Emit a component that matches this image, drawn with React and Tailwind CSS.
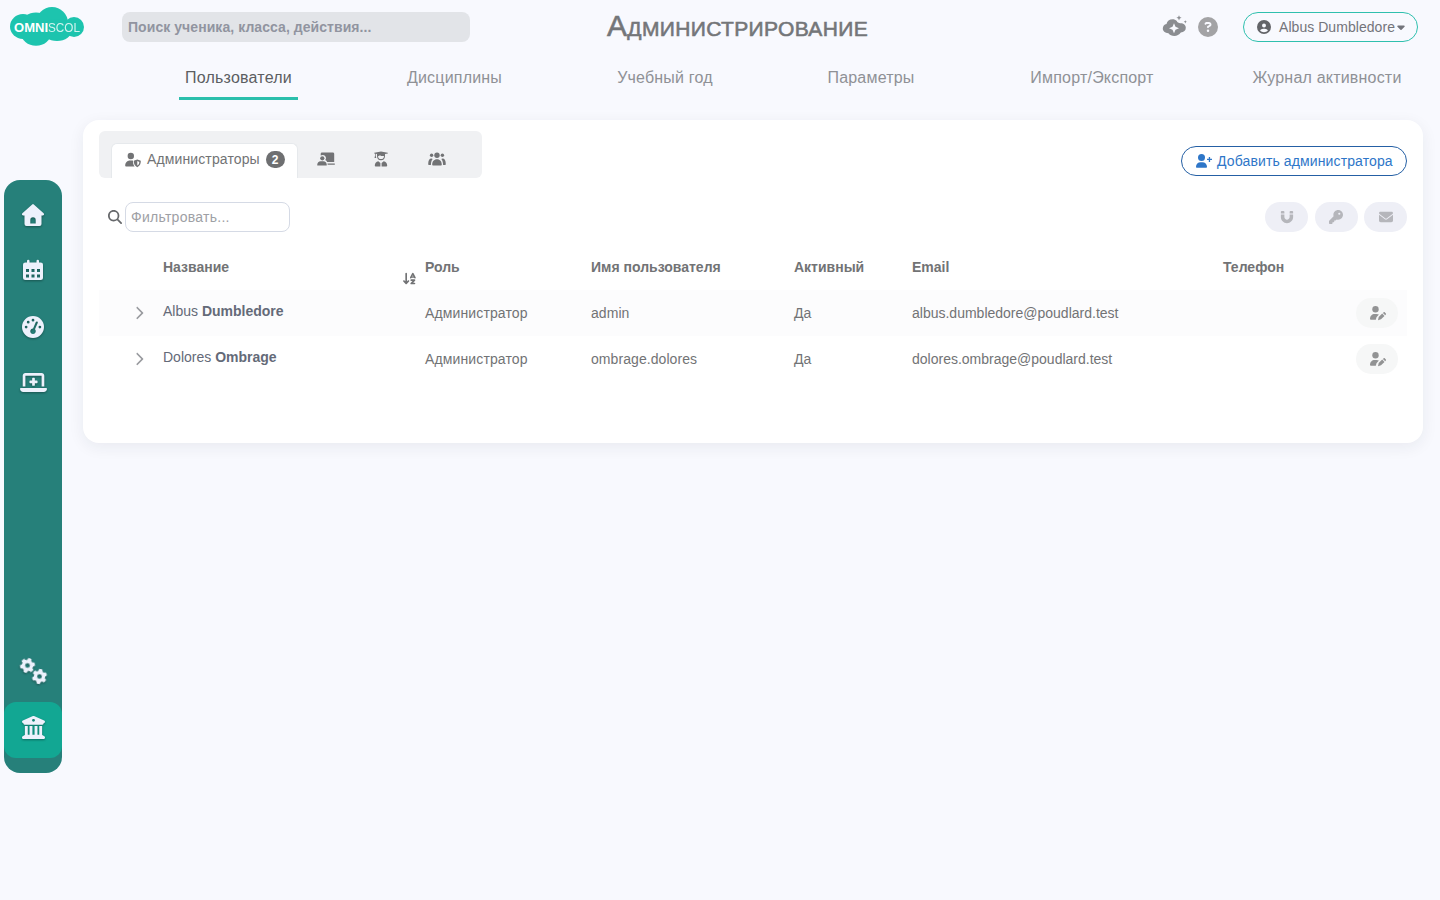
import React, { useState } from 'react';
import {
  FaArrowDownAZ,
  FaBuildingColumns,
  FaCaretDown,
  FaChevronRight,
  FaCircleQuestion,
  FaCircleUser,
  FaEnvelope,
  FaGaugeHigh,
  FaGear,
  FaKey,
  FaLaptopMedical,
  FaMagnet,
  FaMagnifyingGlass,
} from 'react-icons/fa6';

const menu = [
  { label: 'Пользователи', className: 'w-[119px]' },
  { label: 'Дисциплины', className: 'w-[107px]' },
  { label: 'Учебный год', className: 'w-[108px]' },
  { label: 'Параметры', className: 'w-[98px]' },
  { label: 'Импорт/Экспорт', className: 'w-[138px]' },
  { label: 'Журнал активности', className: 'w-[162px] -ml-[18px]' },
];

const users = [
  { first: 'Albus', last: 'Dumbledore', role: 'Администратор', login: 'admin', active: 'Да', email: 'albus.dumbledore@poudlard.test' },
  { first: 'Dolores', last: 'Ombrage', role: 'Администратор', login: 'ombrage.dolores', active: 'Да', email: 'dolores.ombrage@poudlard.test' },
];

const Logo = () => (
  <svg width="76" height="40" viewBox="0 0 76 40" className="ml-[9px] mt-[6px] shrink-0">
    <g fill="#1dc4ae">
      <ellipse cx="14" cy="20.500" rx="13" ry="12.500" />
      <circle cx="43" cy="17" r="16" />
      <ellipse cx="27" cy="27" rx="15" ry="12.700" />
      <ellipse cx="27" cy="17" rx="14" ry="10.500" />
      <ellipse cx="48" cy="24" rx="15" ry="11" />
      <circle cx="65" cy="21" r="10" />
    </g>
    <text x="5" y="25.500" fill="#fff" fontFamily="Liberation Sans, sans-serif" fontSize="13.500" fontWeight="700" textLength="34" lengthAdjust="spacingAndGlyphs">OMNI</text>
    <text x="39" y="25.500" fill="#fff" fontFamily="Liberation Sans, sans-serif" fontSize="13.500" textLength="32" lengthAdjust="spacingAndGlyphs" opacity=".8">SCOL</text>
  </svg>
);

const CloudIcon = () => (
  <svg width="26" height="22" viewBox="0 0 26 22" fill="#8b8d91">
    <path fillRule="evenodd" d="M4.500 9C5 6 7.500 4.300 10.500 4.300c1.700 0 3.200.6 4.300 1.700.4 1.400 1.900 2 3.500 2.300 3.300-.1 5.500 1.700 5.500 4.500s-2 4.500-5 4.800C17.300 19.600 15 21 12.300 21c-2.500 0-4.500-1-5.900-2.800C3 18 .8 16.200.8 13.500c0-2.200 1.400-4 3.700-4.500zM12 8.200l-1.500 3.500L7 13.200l3.500 1.500 1.500 3.500 1.500-3.500 3.500-1.500-3.500-1.500z" />
    <path d="M17 .2l.8 1.800 1.800.8-1.800.8L17 5.400l-.8-1.800-1.800-.8 1.800-.8zM23.300 5.200l.5 1.100 1.100.5-1.100.5-.5 1.100-.5-1.100-1.100-.5 1.100-.5z" />
  </svg>
);

const HouseIcon = () => (
  <svg width="24" height="24" viewBox="0 0 24 24" fill="currentColor">
    <path fillRule="evenodd" d="M11.200 1.400a1.200 1.200 0 0 1 1.600 0L22.600 10.300c.9.800.4 2.200-.8 2.200H20.500V21a2 2 0 0 1-2 2h-13a2 2 0 0 1-2-2v-8.500H2.200c-1.200 0-1.700-1.400-.8-2.200zM9.300 20.500h5.400V17a2.700 2.700 0 0 0-5.400 0z" />
  </svg>
);

const CalendarIcon = () => (
  <svg width="22" height="24" viewBox="0 0 22 24" fill="currentColor">
    <path fillRule="evenodd" d="M5 2a1.250 1.250 0 0 1 2.500 0v1.500h7V2A1.250 1.250 0 0 1 17 2v1.500h1.500A2.500 2.500 0 0 1 21 6v12.500a2.500 2.500 0 0 1-2.500 2.500h-15A2.500 2.500 0 0 1 1 18.500V6a2.500 2.500 0 0 1 2.500-2.500H5zM4 10v3h3v-3zm5.500 0v3h3v-3zm5.500 0v3h3v-3zM4 15.500v3h3v-3zm5.500 0v3h3v-3zm5.500 0v3h3v-3z" />
  </svg>
);

const GearsIcon = () => (
  <div className="flex h-[27px] w-[27px] justify-between">
    <FaGear size={15} className="shrink-0 rotate-[20deg]" />
    <FaGear size={15} className="-ml-[3px] mt-[11px] shrink-0 rotate-[10deg]" />
  </div>
);

const UserShieldIcon = () => (
  <svg width="16" height="16" viewBox="0 0 16 16" fill="currentColor" className="mr-[6px] shrink-0">
    <circle cx="5.800" cy="4" r="3.200" />
    <path d="M1 14.500c-.5 0-.8-.3-.8-.8 0-3 2-5.200 4.800-5.200h1.800c.5 0 .9.100 1.300.2v1.600c0 1.600.5 3 1.500 4.200z" />
    <path fillRule="evenodd" d="M12.300 7.400l3 1.200c.3.100.5.400.5.700 0 2.600-.9 4.600-3.500 5.900-2.600-1.300-3.500-3.300-3.500-5.900 0-.3.200-.6.500-.7zm0 1.700v4.400c1.300-.8 1.900-1.900 2-3.600z" />
  </svg>
);

const UserPlusIcon = () => (
  <svg width="18" height="16" viewBox="0 0 18 16" fill="currentColor" className="mr-[4px] shrink-0">
    <circle cx="6.500" cy="4.500" r="3.500" />
    <path d="M2 14.800c-.6 0-1-.4-1-1C1 11 3 9.200 5.500 9.200h2c2.500 0 4.500 1.800 4.500 4.600 0 .6-.4 1-1 1zM13.800 4h1.300v1.800H17v1.300h-1.900V9h-1.300V7.100H12V5.800h1.800z" />
  </svg>
);

const UserPenIcon = () => (
  <svg width="17" height="16" viewBox="0 0 17 16" fill="currentColor">
    <circle cx="6.500" cy="4.200" r="3.200" />
    <path d="M1.900 14.800c-.5 0-.9-.3-.9-.8C1 11 3 9 5.700 9h1.800c.9 0 1.700.2 2.400.6l-2.400 2.600-.7 2.600zM13.200 8.600l2.300 2.300-3.500 3.400-3 .9.700-3.100zM13.900 7.900l.6-.5c.4-.4 1-.4 1.400 0l.8.900c.4.400.4 1 0 1.400l-.5.500z" />
  </svg>
);

const TeacherIcon = () => (
  <svg width="18" height="14" viewBox="0 0 18 14" fill="currentColor">
    <path d="M5 .5h10.800c.8 0 1.400.6 1.400 1.400v8.200h-7c-.4-.9-1-1.600-1.900-2 .5-.6.700-1.300.7-2 0-1.800-1.400-3.200-3.200-3.200-.8 0-1.500.2-2.100.7V1.900C3.700 1.100 4.200.5 5 .5z" />
    <circle cx="5.300" cy="6.300" r="2.100" />
    <path d="M.8 13.500c-.4 0-.6-.3-.6-.6 0-2.100 1.500-3.600 3.500-3.600h2.600c2 0 3.500 1.500 3.500 3.600 0 .4-.3.600-.6.600zM10.500 11.500h7.300v1.300h-7.100z" />
  </svg>
);

const StudentIcon = () => (
  <svg width="14" height="16" viewBox="0 0 14 16" fill="currentColor">
    <path d="M.3 1.700L7 .5l6.700 1.200c.4.100.4.700 0 .8L11 3.100v2h-1.200C8 5.200 6.500 4.700 5.800 4.200 5.200 5 4.300 5.300 3 5.400V3.100l-1.300-.3v2L2.300 7H.5l.5-2.200V2.600L.3 2.500c-.4-.1-.4-.7 0-.8z" />
    <path d="M3 5c0 2.800 1.500 4.200 4 4.200s4-1.400 4-4.200h-1c0 2-1 3.100-3 3.100S4 7 4 5zM4.300 10.200L6.400 12v3.500H1.600c-.5 0-.8-.3-.8-.8 0-2.500 1.300-4.200 3.500-4.500zM9.700 10.200L7.600 12v3.500h4.800c.5 0 .8-.3.800-.8 0-2.500-1.300-4.200-3.500-4.500z" />
  </svg>
);

const GroupIcon = () => (
  <svg width="18" height="14" viewBox="0 0 18 14" fill="currentColor">
    <circle cx="9" cy="3.200" r="2.700" />
    <circle cx="3.600" cy="3.300" r="1.700" />
    <circle cx="14.400" cy="3.300" r="1.700" />
    <path d="M5 13.500c-.5 0-.8-.3-.8-.8C4.200 9.500 6 7.200 9 7.200s4.800 2.300 4.800 5.500c0 .5-.3.800-.8.800zM4.700 7C3.500 8.400 3 10 2.900 13H.9c-.4 0-.7-.3-.7-.7C.2 8.500 1.300 6.500 3.400 6.500c.5 0 .9.200 1.300.5zM13.300 7c1.200 1.400 1.700 3 1.800 6h2c.4 0 .7-.3.7-.7 0-3.800-1.100-5.800-3.200-5.800-.5 0-.9.200-1.300.5z" />
  </svg>
);

const Sidebar = () => (
  <aside className="ml-1 mt-[126px] flex h-[593px] w-[58px] shrink-0 flex-col items-center rounded-2xl bg-[#26807a] text-[#edf1fc]">
    <div className="flex h-[505px] w-full flex-col items-center pt-[23px] [&_svg]:drop-shadow-[0_1px_1px_rgba(0,0,0,0.35)]">
      <HouseIcon />
      <div className="mt-8 h-6"><CalendarIcon /></div>
      <FaGaugeHigh size={22} className="mt-[33px]" />
      <FaLaptopMedical size={27} className="mt-[31px]" />
      <div className="mt-auto"><GearsIcon /></div>
    </div>
    <div className="mt-[17px] flex h-[56px] w-full items-center justify-center rounded-xl bg-[#12a793] pb-[5px]">
      <FaBuildingColumns size={23} className="drop-shadow-[0_1px_1px_rgba(0,0,0,0.35)]" />
    </div>
  </aside>
);

const Header = () => (
  <header className="flex h-[54px] items-start">
    <Logo />
    <input
      className="ml-[37px] mt-[12px] h-[30px] w-[348px] rounded-lg bg-[#e2e4e8] px-[6px] text-[14px] font-bold tracking-[0.06px] outline-none placeholder:text-[#9194a0]"
      placeholder="Поиск ученика, класса, действия..."
    />
    <h1 className="ml-[137px] mt-[8px] w-[262px] whitespace-nowrap text-[30px] leading-[36px] tracking-[0.36px] text-[#747679] [-webkit-text-stroke:0.6px_#747679] [font-variant:small-caps]">
      Администрирование
    </h1>
    <div className="ml-auto mr-[22px] flex items-center">
      <div className="mt-[15px] self-start"><CloudIcon /></div>
      <FaCircleQuestion size={20} className="ml-[10px] mt-[12px] text-[#a3a3a5]" />
      <button className="ml-[25px] mt-[12px] flex h-[30px] w-[175px] items-center whitespace-nowrap rounded-full border border-[#2fc0ae] pl-[13px] text-[14px] tracking-[0.05px] text-[#73747b]">
        <FaCircleUser size={14} className="mr-[8px] shrink-0 text-[#636468]" />
        Albus Dumbledore
        <FaCaretDown size={12} className="shrink-0" />
      </button>
    </div>
  </header>
);

const Menu = () => (
  <nav className="ml-[117px] flex h-[46px] gap-[103px] text-[16px] tracking-[0.2px] text-[#8f9196]">
    {menu.map((item, i) => (
      <a
        key={item.label}
        className={`${item.className} flex shrink-0 justify-center whitespace-nowrap pt-[12px] leading-6 ${i === 0 ? 'border-b-[3px] border-[#2bbfac] text-[#5c5e62]' : ''}`}
      >
        {item.label}
      </a>
    ))}
  </nav>
);

const UserTabs = () => (
  <div className="flex h-[47px] w-[383px] items-end rounded-md bg-[#f0f1f3] pl-3 text-[#727375]">
    <div className="flex h-[35px] w-[187px] items-center whitespace-nowrap rounded-t-md border border-b-0 border-[#e6e9ec] bg-white pb-[3px] pl-[13px] text-[14px] tracking-[0.12px]">
      <UserShieldIcon />
      Администраторы
      <span className="ml-[6px] flex h-[17px] w-[19px] items-center justify-center rounded-full bg-[#6e6f71] text-[12px] font-bold text-white">2</span>
    </div>
    <div className="ml-[19px] flex h-[38px] items-center">
      <TeacherIcon />
      <div className="ml-[39px]"><StudentIcon /></div>
      <div className="ml-[40px]"><GroupIcon /></div>
    </div>
  </div>
);

const ActionButton = ({ children }) => (
  <button className="flex h-[30px] w-[43px] items-center justify-center rounded-full bg-[#eeeff6] text-[#b5b6bb]">
    {children}
  </button>
);

const columns = 'grid grid-cols-[64px_262px_166px_203px_118px_311px_184px]';

const UserTable = () => (
  <div className="text-[14px] text-[#727375]">
    <div className={`${columns} h-[48px] pt-[15px] font-bold leading-5`}>
      <span />
      <div className="flex justify-between">
        Название
        <FaArrowDownAZ size={15} className="mr-[8px] mt-[14px]" />
      </div>
      <span>Роль</span>
      <span>Имя пользователя</span>
      <span>Активный</span>
      <span>Email</span>
      <span>Телефон</span>
    </div>
    {users.map((user, i) => (
      <div key={user.email} className={`${columns} h-[46px] items-center whitespace-nowrap ${i === 0 ? 'bg-[#fcfcfd]' : ''}`}>
        <FaChevronRight size={14} className="ml-[33px] text-[#999b9f]" />
        <span className="pb-1 text-[#646a78]">{user.first} <b>{user.last}</b></span>
        <span className="tracking-[0.13px]">{user.role}</span>
        <span className="tracking-[0.07px]">{user.login}</span>
        <span>{user.active}</span>
        <span>{user.email}</span>
        <button className="ml-[133px] flex h-[30px] w-[42px] items-center justify-center rounded-full bg-[#f6f7f7] text-[#929394]">
          <UserPenIcon />
        </button>
      </div>
    ))}
  </div>
);

const App = () => {
  const [filter, setFilter] = useState('');

  return (
    <div className="h-[900px] w-[1440px] overflow-hidden bg-[#f8f9fe] font-['Liberation_Sans',Arial,sans-serif]">
      <Header />
      <div className="flex">
        <Sidebar />
        <div className="min-w-0 flex-1">
          <Menu />
          <main className="ml-[21px] mt-[20px] h-[323px] w-[1340px] rounded-2xl bg-white px-4 pt-[11px] shadow-[0_4px_16px_rgba(30,40,60,0.07)]">
            <div className="flex justify-between">
              <UserTabs />
              <button className="mt-[15px] flex h-[30px] w-[226px] items-center whitespace-nowrap rounded-full border border-[#2560a5] pl-[13px] text-[14px] tracking-[0.12px] text-[#2e76c8]">
                <UserPlusIcon />
                Добавить администратора
              </button>
            </div>
            <div className="mt-[24px] flex items-center justify-between">
              <label className="flex items-center pl-[9px]">
                <FaMagnifyingGlass size={14} className="mr-[3px] text-[#66686b]" />
                <input
                  className="h-[30px] w-[165px] rounded-lg border border-[#d5dae5] px-[5px] text-[14px] tracking-[0.27px] outline-none placeholder:text-[#9ea0a5]"
                  placeholder="Фильтровать..."
                  value={filter}
                  onChange={(e) => setFilter(e.target.value)}
                />
              </label>
              <div className="flex gap-[6.5px]">
                <ActionButton><FaMagnet size={14} /></ActionButton>
                <ActionButton><FaKey size={14} /></ActionButton>
                <ActionButton><FaEnvelope size={14} /></ActionButton>
              </div>
            </div>
            <div className="mt-[10px]"><UserTable /></div>
          </main>
        </div>
      </div>
    </div>
  );
};

export default App;
